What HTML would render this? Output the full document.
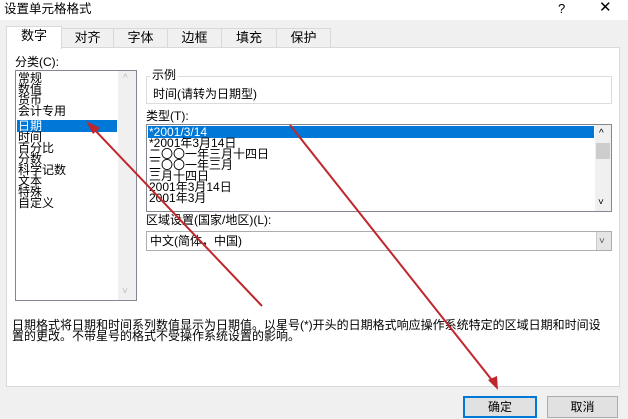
<!DOCTYPE html><html><head><meta charset="utf-8"><style>
*{margin:0;padding:0;box-sizing:border-box}
body{width:628px;height:419px;background:#f0f0f0;font-family:"Liberation Sans","Noto Sans CJK SC",sans-serif;font-size:12px;color:#000;position:relative;overflow:hidden}
.a{position:absolute}
.t{white-space:nowrap;line-height:12px}
.tab{position:absolute;top:28px;height:20px;border:1px solid #d9d9d9;border-bottom:none;text-align:center;line-height:18px;font-size:13px;background:#f0f0f0}
.box{position:absolute;border:1px solid #828790;background:#fff}
.li{position:absolute;left:2px;line-height:11px;font-size:12px;white-space:nowrap}
</style></head><body>
<div class="a" style="left:0;top:0;width:628px;height:20px;background:#fff"></div>
<div class="a t" style="left:4px;top:3px;font-size:12.5px">设置单元格格式</div>
<div class="a t" style="left:558px;top:3px;font-size:13px">?</div>
<div class="a t" style="left:599px;top:2px;font-size:15px">✕</div>
<div class="tab" style="left:61px;width:53px">对齐</div>
<div class="tab" style="left:113px;width:55px">字体</div>
<div class="tab" style="left:167px;width:55px">边框</div>
<div class="tab" style="left:221px;width:56px">填充</div>
<div class="tab" style="left:276px;width:55px">保护</div>
<div class="a" style="left:6px;top:47px;width:614px;height:340px;background:#fff;border:1px solid #d9d9d9"></div>
<div class="tab" style="left:6px;top:26px;width:56px;height:23px;background:#fff;border-color:#d9d9d9">数字</div>
<div class="a t" style="left:15px;top:56px">分类(C):</div>
<div class="box" style="left:15px;top:70px;width:122px;height:231px">
<div class="a" style="left:102px;top:0;width:18px;height:229px;background:#f0f0f0"></div>
<div class="a t" style="left:107px;top:2px;color:#bbb;font-size:10px">^</div>
<div class="a t" style="left:106px;top:215px;color:#bbb;font-size:10px">˅</div>
<div class="a" style="left:1px;top:49px;width:100px;height:12px;background:#0078d7"></div>
<div class="li" style="top:2px">常规</div><div class="li" style="top:13px">数值</div><div class="li" style="top:24px">货币</div><div class="li" style="top:35px">会计专用</div>
<div class="li" style="top:50px;color:#fff">日期</div><div class="li" style="top:61px">时间</div><div class="li" style="top:72px">百分比</div><div class="li" style="top:83px">分数</div><div class="li" style="top:94px">科学记数</div><div class="li" style="top:105px">文本</div><div class="li" style="top:116px">特殊</div><div class="li" style="top:127px">自定义</div>
</div>
<div class="a" style="left:146px;top:76px;width:466px;height:28px;border:1px solid #dcdcdc"></div>
<div class="a t" style="left:150px;top:69px;background:#fff;padding:0 2px">示例</div>
<div class="a t" style="left:153px;top:88px">时间(请转为日期型)</div>
<div class="a t" style="left:146px;top:110px">类型(T):</div>
<div class="box" style="left:146px;top:124px;width:466px;height:88px">
<div class="a" style="left:448px;top:0;width:16px;height:86px;background:#f0f0f0"></div>
<div class="a" style="left:449px;top:18px;width:14px;height:16px;background:#cdcdcd"></div>
<div class="a t" style="left:452px;top:3px;font-size:10px">^</div>
<div class="a t" style="left:451px;top:72px;font-size:10px">˅</div>
<div class="a" style="left:1px;top:1px;width:446px;height:12px;background:#0078d7"></div>
<div class="li" style="top:2px;color:#fff">*2001/3/14</div><div class="li" style="top:13px">*2001年3月14日</div><div class="li" style="top:24px">二〇〇一年三月十四日</div><div class="li" style="top:35px">二〇〇一年三月</div><div class="li" style="top:46px">三月十四日</div><div class="li" style="top:57px">2001年3月14日</div><div class="li" style="top:68px">2001年3月</div>
</div>
<div class="a t" style="left:146px;top:214px">区域设置(国家/地区)(L):</div>
<div class="a" style="left:146px;top:231px;width:466px;height:20px;border:1px solid #adadad;background:#fff"></div>
<div class="a" style="left:596px;top:232px;width:15px;height:18px;background:#e5e5e5;border-left:1px solid #ccc"></div>
<div class="a t" style="left:599px;top:236px;font-size:10px;color:#555">˅</div>
<div class="a t" style="left:150px;top:235px">中文(简体，中国)</div>
<div class="a t" style="left:12px;top:320px;font-size:12px;line-height:11px;width:600px;white-space:normal">日期格式将日期和时间系列数值显示为日期值。以星号(*)开头的日期格式响应操作系统特定的区域日期和时间设置的更改。不带星号的格式不受操作系统设置的影响。</div>
<div class="a" style="left:463px;top:396px;width:74px;height:22px;border:2px solid #0078d7;background:#e1e1e1;text-align:center;line-height:18px">确定</div>
<div class="a" style="left:547px;top:396px;width:71px;height:22px;border:1px solid #adadad;background:#e1e1e1;text-align:center;line-height:20px">取消</div>
<svg class="a" style="left:0;top:0" width="628" height="419"><g stroke="#c0262b" stroke-width="2" fill="#c0262b">
<line x1="262" y1="306" x2="92" y2="127"/><polygon points="86,121 100,128 93,134" stroke="none"/>
<line x1="290" y1="125" x2="495" y2="384"/><polygon points="498,390 488,380 497,376" stroke="none"/>
</g></svg>
</body></html>
